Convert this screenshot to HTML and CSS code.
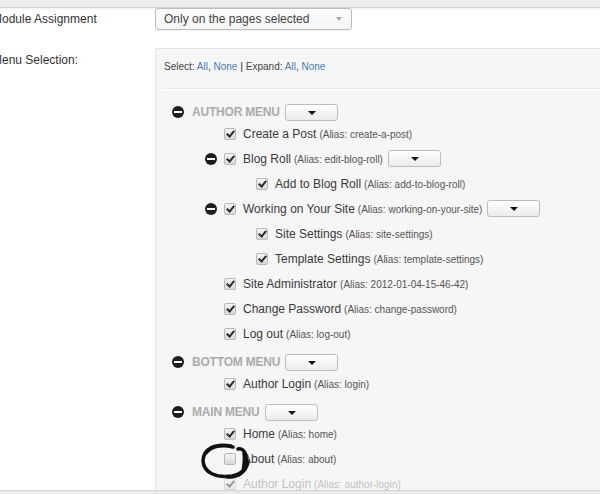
FILE: index.html
```html
<!DOCTYPE html>
<html>
<head>
<meta charset="utf-8">
<link rel="stylesheet" href="styles.css">
</head>
<body>
<div class="topbar"></div>
<div class="form">
  <div class="frow r1">
    <div class="label">Module Assignment</div>
    <div class="select">Only on the pages selected<span class="sel-arrow"></span></div>
  </div>
  <div class="frow r2">
    <div class="label lab2">Menu Selection:</div>
    <div class="panel">
      <div class="controls">Select: <a>All</a>, <a>None</a> <span class="pipe">|</span> Expand: <a>All</a>, <a>None</a></div>
      <div class="tree">
        <div class="hrow first"><span class="minus"></span><span class="menu">AUTHOR MENU</span><span class="btn"></span></div>
        <div class="row l1"><span class="slot"></span><span class="cb on"></span><span class="name">Create a Post</span><span class="alias">(Alias: create-a-post)</span></div>
        <div class="row l1"><span class="slot"><span class="minus"></span></span><span class="cb on"></span><span class="name">Blog Roll</span><span class="alias">(Alias: edit-blog-roll)</span><span class="btn"></span></div>
        <div class="row l2"><span class="slot"></span><span class="cb on"></span><span class="name">Add to Blog Roll</span><span class="alias">(Alias: add-to-blog-roll)</span></div>
        <div class="row l1"><span class="slot"><span class="minus"></span></span><span class="cb on"></span><span class="name">Working on Your Site</span><span class="alias">(Alias: working-on-your-site)</span><span class="btn"></span></div>
        <div class="row l2"><span class="slot"></span><span class="cb on"></span><span class="name">Site Settings</span><span class="alias">(Alias: site-settings)</span></div>
        <div class="row l2"><span class="slot"></span><span class="cb on"></span><span class="name">Template Settings</span><span class="alias">(Alias: template-settings)</span></div>
        <div class="row l1"><span class="slot"></span><span class="cb on"></span><span class="name">Site Administrator</span><span class="alias">(Alias: 2012-01-04-15-46-42)</span></div>
        <div class="row l1"><span class="slot"></span><span class="cb on"></span><span class="name">Change Password</span><span class="alias">(Alias: change-password)</span></div>
        <div class="row l1"><span class="slot"></span><span class="cb on"></span><span class="name">Log out</span><span class="alias">(Alias: log-out)</span></div>
        <div class="hrow"><span class="minus"></span><span class="menu">BOTTOM MENU</span><span class="btn"></span></div>
        <div class="row l1"><span class="slot"></span><span class="cb on"></span><span class="name">Author Login</span><span class="alias">(Alias: login)</span></div>
        <div class="hrow"><span class="minus"></span><span class="menu">MAIN MENU</span><span class="btn"></span></div>
        <div class="row l1"><span class="slot"></span><span class="cb on"></span><span class="name">Home</span><span class="alias">(Alias: home)</span></div>
        <div class="row l1"><span class="slot"></span><span class="cb"></span><span class="name">About</span><span class="alias">(Alias: about)</span></div>
        <div class="row l1 faded"><span class="slot"></span><span class="cb on"></span><span class="name">Author Login</span><span class="alias">(Alias: author-login)</span></div>
      </div>
    </div>
  </div>
</div>
<svg class="scribble" width="56" height="42" viewBox="0 0 56 42">
  <path d="M32 5 C 16 2, 4 8, 4 20 C 5 32, 17 37, 33 35 C 45 33, 49 25, 47 15 C 46 10, 43 7, 39 8 M 7 12 C 12 5, 23 3, 34 6 M 28 36 C 39 37, 47 31, 49 21 M 45 12 C 46 18, 45 25, 44 30" fill="none" stroke="#111" stroke-width="3.5" stroke-linecap="round"/>
</svg>
<div class="bottombar"></div>
</body>
</html>
```

FILE: styles.css
```css
html, body {
  margin: 0;
  padding: 0;
  background: #fff;
  overflow: hidden;
  width: 600px;
  height: 494px;
}
body {
  font-family: "Liberation Sans", Arial, sans-serif;
  color: #333;
  position: relative;
}
.topbar {
  height: 7px;
  background: #eeeeee;
  border-bottom: 1px solid #d6d6d6;
  box-shadow: 0 1px 2px rgba(0,0,0,0.06);
}
.form {
  display: flex;
  flex-direction: column;
}
.frow {
  display: flex;
  align-items: flex-start;
}
.label {
  width: 163px;
  margin-left: -8px;
  font-size: 12px;
  line-height: 22px;
  color: #333;
  flex: none;
}
.lab2 {
  line-height: 15px;
  padding-top: 5px;
}
.select {
  width: 187px;
  height: 20px;
  border: 1px solid #bcbcbc;
  border-radius: 3px;
  background: linear-gradient(#ffffff, #f4f4f4);
  font-size: 12px;
  line-height: 20px;
  color: #444;
  padding-left: 8px;
  position: relative;
  box-shadow: 0 1px 1px rgba(0,0,0,0.05);
}
.sel-arrow {
  position: absolute;
  right: 9px;
  top: 8px;
  width: 0;
  height: 0;
  border-left: 3px solid transparent;
  border-right: 3px solid transparent;
  border-top: 4px solid #a5a5a5;
}
.r2 {
  margin-top: 18px;
}
.panel {
  flex: 1;
  margin-right: -20px;
  background: #f6f6f6;
  border: 1px solid #e4e4e4;
  border-radius: 2px;
  height: 460px;
}
.controls {
  margin: 0 8px;
  padding: 11px 0 15px;
  font-size: 10px;
  line-height: 12px;
  color: #444;
  border-bottom: 1px solid #e6e6e6;
  box-shadow: 0 1px 0 #ffffff;
}
.controls a {
  color: #3d7fc0;
}
.pipe {
  color: #333;
  font-size: 11px;
}
.tree {
  padding-top: 14px;
}
.hrow {
  height: 18px;
  margin-top: 7px;
  display: flex;
  align-items: center;
  padding-left: 16px;
}
.hrow.first {
  margin-top: 0;
}
.menu {
  font-size: 12px;
  font-weight: bold;
  color: #ababab;
  margin-left: 8px;
  letter-spacing: -0.2px;
}
.minus {
  display: inline-block;
  width: 12px;
  height: 12px;
  border-radius: 50%;
  background: #1e1e1e;
  position: relative;
  flex: none;
}
.minus::after {
  content: "";
  position: absolute;
  left: 2px;
  right: 2px;
  top: 5px;
  height: 2px;
  background: #fff;
}
.row {
  height: 25px;
  display: flex;
  align-items: center;
  font-size: 12px;
  white-space: nowrap;
}
.row.l1 { padding-left: 49px; }
.row.l2 { padding-left: 81px; }
.slot {
  width: 19px;
  flex: none;
  display: flex;
  align-items: center;
}
.cb {
  width: 10px;
  height: 10px;
  border: 1px solid #b8b8b8;
  border-radius: 2px;
  background: linear-gradient(#f4f4f4, #d9d9d9);
  position: relative;
  flex: none;
  margin-right: 7px;
}
.cb.on::after {
  content: "";
  position: absolute;
  left: 3px;
  top: 0px;
  width: 3px;
  height: 6px;
  border-right: 2px solid #2a2a2a;
  border-bottom: 2px solid #2a2a2a;
  transform: rotate(40deg);
}
.name {
  color: #3a3a3a;
  font-size: 12px;
}
.alias {
  color: #555;
  font-size: 10px;
  margin-left: 3px;
  padding-top: 1px;
}
.btn {
  display: inline-block;
  width: 51px;
  height: 15px;
  border: 1px solid #bdbdbd;
  border-radius: 3px;
  background: linear-gradient(#ffffff, #ececec);
  margin-left: 5px;
  position: relative;
  flex: none;
}
.btn::after {
  content: "";
  position: absolute;
  left: 22px;
  top: 6px;
  width: 0;
  height: 0;
  border-left: 4px solid transparent;
  border-right: 4px solid transparent;
  border-top: 4px solid #111;
}
.faded .name, .faded .alias {
  color: #c2c2c2;
}
.faded .cb {
  opacity: 0.45;
}
.scribble {
  position: absolute;
  left: 199px;
  top: 441px;
}
.bottombar {
  position: absolute;
  left: 0;
  right: 0;
  bottom: 0;
  height: 3px;
  background: #ebebeb;
  border-top: 1px solid #d4d4d4;
}
```
